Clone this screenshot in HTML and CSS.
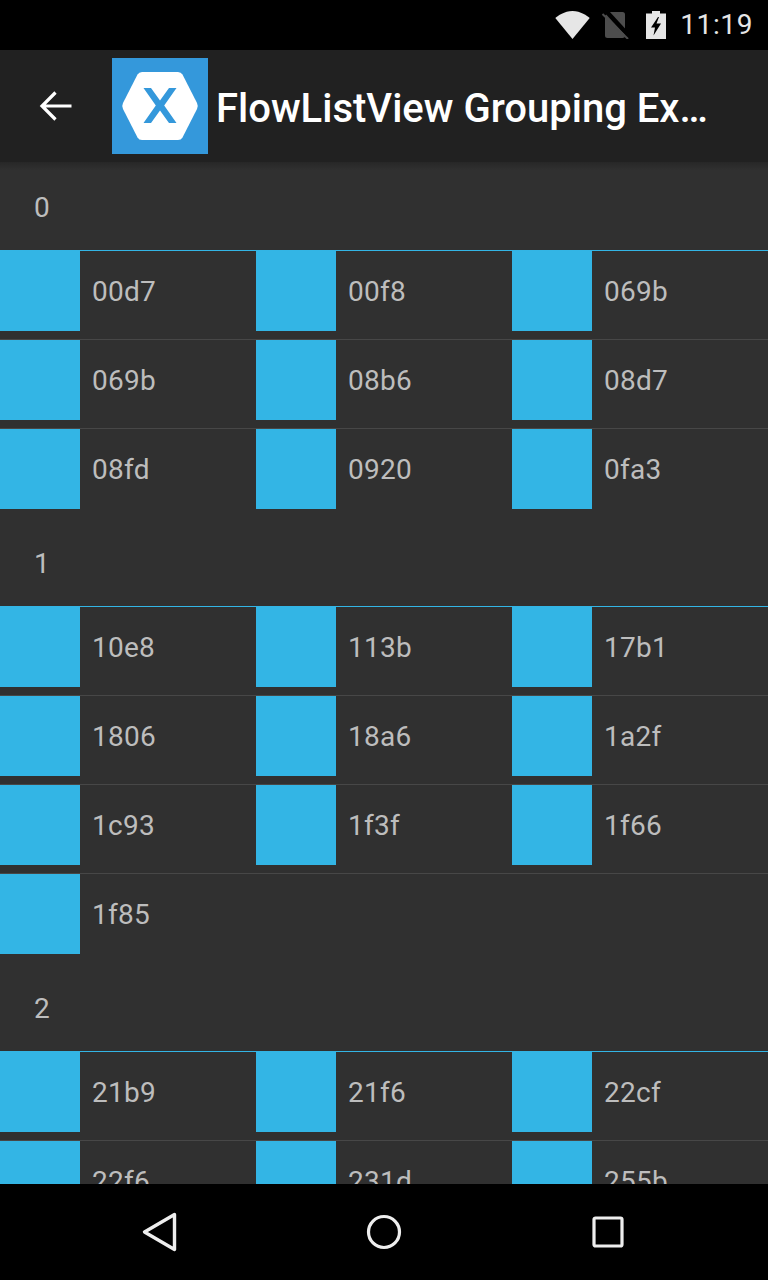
FILE: index.html
```html
<!DOCTYPE html>
<html lang="en">
<head>
<meta charset="utf-8">
<title>FlowListView Grouping Example</title>
<link rel="stylesheet" href="styles.css">
</head>
<body>
<div class="screen">
  <div class="status">
    <svg class="ic-wifi" width="36" height="28" viewBox="0 0 36 28"><path d="M17.500 28 0.300 7C3 4.800 9.300 0 17.500 0s14.500 4.800 17.200 7z" fill="#e6e6e6"/></svg>
    <svg class="ic-sim" width="28" height="28" viewBox="0 0 28 28"><path d="M7 1h14.500a2.500 2.500 0 0 1 2.500 2.500V24.500a2.500 2.500 0 0 1-2.500 2.500H6.500A2.500 2.500 0 0 1 4 24.500V5z" fill="#4d4d4d"/><path d="M3 1 27 27" stroke="#000" stroke-width="4.500" transform="translate(1.500 -1.500)"/><path d="M1.500 3 27 28" stroke="#4d4d4d" stroke-width="2"/></svg>
    <svg class="ic-bat" width="20" height="28" viewBox="0 0 20 28"><path d="M6 0h8v2.500h6V28H0V2.500h6z" fill="#e6e6e6"/><path d="M12 6 5 16.500h4L7.500 24.500 15 12.500h-4.500l2.500-6.500z" fill="#000"/></svg>
    <span class="clock">11:19</span>
  </div>
  <header class="bar">
    <svg class="back" width="36" height="36" viewBox="0 0 36 36"><path d="M33.500 18H5M17.500 4.500 4 18l13.500 13.500" fill="none" stroke="#fff" stroke-width="3.200"/></svg>
    <div class="logo">
      <svg width="78" height="70" viewBox="0 0 78 70"><path d="M21 1h36q3 0 4.500 2.500L76 32q1.500 3 0 6L61.500 66.500Q60 69 57 69H21q-3 0-4.500-2.500L2 38q-1.500-3 0-6L16.500 3.500Q18 1 21 1z" fill="#fff"/><path d="M22.500 17h7.500l9 12.500 9-12.500h7.500L43.200 34.500 55.500 52H48l-9-12.500L30 52h-7.500l12.300-17.500z" fill="#3498db"/></svg>
    </div>
    <h1 class="title">FlowListView Grouping Ex…</h1>
  </header>
  <main class="list">
    <div class="shadow"></div>
    <section class="group">
      <div class="group-head">0</div>
      <div class="row"><div class="cell"><i class="sq"></i><span>00d7</span></div><div class="cell"><i class="sq"></i><span>00f8</span></div><div class="cell"><i class="sq"></i><span>069b</span></div></div>
      <div class="row"><div class="cell"><i class="sq"></i><span>069b</span></div><div class="cell"><i class="sq"></i><span>08b6</span></div><div class="cell"><i class="sq"></i><span>08d7</span></div></div>
      <div class="row last"><div class="cell"><i class="sq"></i><span>08fd</span></div><div class="cell"><i class="sq"></i><span>0920</span></div><div class="cell"><i class="sq"></i><span>0fa3</span></div></div>
    </section>
    <section class="group">
      <div class="group-head">1</div>
      <div class="row"><div class="cell"><i class="sq"></i><span>10e8</span></div><div class="cell"><i class="sq"></i><span>113b</span></div><div class="cell"><i class="sq"></i><span>17b1</span></div></div>
      <div class="row"><div class="cell"><i class="sq"></i><span>1806</span></div><div class="cell"><i class="sq"></i><span>18a6</span></div><div class="cell"><i class="sq"></i><span>1a2f</span></div></div>
      <div class="row"><div class="cell"><i class="sq"></i><span>1c93</span></div><div class="cell"><i class="sq"></i><span>1f3f</span></div><div class="cell"><i class="sq"></i><span>1f66</span></div></div>
      <div class="row last"><div class="cell"><i class="sq"></i><span>1f85</span></div></div>
    </section>
    <section class="group">
      <div class="group-head">2</div>
      <div class="row"><div class="cell"><i class="sq"></i><span>21b9</span></div><div class="cell"><i class="sq"></i><span>21f6</span></div><div class="cell"><i class="sq"></i><span>22cf</span></div></div>
      <div class="row"><div class="cell"><i class="sq"></i><span>22f6</span></div><div class="cell"><i class="sq"></i><span>231d</span></div><div class="cell"><i class="sq"></i><span>255b</span></div></div>
    </section>
  </main>
  <nav class="nav">
    <svg width="36" height="40" viewBox="0 0 36 40"><path d="M32.500 2.500 2.500 20l30 17.500z" fill="none" stroke="#eee" stroke-width="3.400" stroke-linejoin="round"/></svg>
    <svg width="36" height="36" viewBox="0 0 36 36"><circle cx="18" cy="18" r="15.500" fill="none" stroke="#eee" stroke-width="3.200"/></svg>
    <svg width="32" height="32" viewBox="0 0 32 32"><rect x="2" y="2" width="28" height="28" rx="1.500" fill="none" stroke="#eee" stroke-width="3.200"/></svg>
  </nav>
</div>
</body>
</html>
```

FILE: styles.css
```css
* { box-sizing: border-box; }
html, body { margin: 0; padding: 0; background: #000; }
.screen {
  width: 768px;
  height: 1280px;
  display: flex;
  flex-direction: column;
  overflow: hidden;
  font-family: Roboto, "Liberation Sans", sans-serif;
}
.status {
  height: 50px;
  flex: none;
  background: #000;
  display: flex;
  align-items: center;
  justify-content: flex-end;
  padding-right: 15px;
}
.ic-wifi { margin-right: 10px; }
.ic-sim { margin-right: 17px; }
.ic-bat { margin-right: 14px; }
.clock { font-size: 28px; color: #e6e6e6; line-height: 50px; letter-spacing: 0.6px; }
.bar {
  height: 112px;
  flex: none;
  background: #212121;
  display: flex;
  align-items: center;
  padding-left: 38px;
}
.back { margin-right: 38px; flex: none; }
.logo {
  width: 96px;
  height: 96px;
  flex: none;
  background: #3498db;
  display: flex;
  align-items: center;
  justify-content: center;
}
.title {
  margin: 4px 0 0 8px;
  font-size: 40px;
  font-weight: 500;
  color: #fff;
  white-space: nowrap;
}
.list {
  flex: 1;
  min-height: 0;
  overflow: hidden;
  background: #303030;
  position: relative;
}
.shadow {
  position: absolute;
  top: 0;
  left: 0;
  right: 0;
  height: 8px;
  background: linear-gradient(#272727, #303030);
}
.group-head {
  position: relative;
  height: 89px;
  padding: 3px 0 0 34px;
  line-height: 85px;
  font-size: 28px;
  color: #bdbdbd;
  border-bottom: 1px solid #33b5e5;
}
.row {
  height: 89px;
  padding-bottom: 8px;
  display: grid;
  grid-template-columns: repeat(3, 256px);
  border-bottom: 1px solid #474747;
}
.row.last { border-bottom-color: transparent; }
.cell { display: flex; align-items: center; }
.sq { width: 80px; height: 80px; background: #33b5e5; flex: none; }
.cell span {
  margin-left: 12px;
  font-size: 28px;
  letter-spacing: 0.25px;
  color: #bdbdbd;
}
.nav {
  height: 96px;
  flex: none;
  background: #000;
  display: flex;
  align-items: center;
  position: relative;
  justify-content: space-between;
  padding: 0 144px 0 142px;
}
.nav svg:nth-child(2) { margin-left: -2px; }
```
